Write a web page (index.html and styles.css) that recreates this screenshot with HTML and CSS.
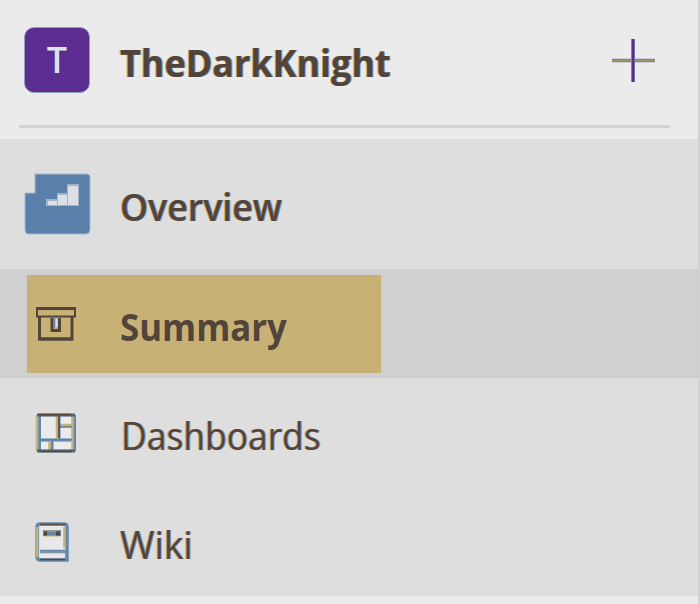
FILE: index.html
```
<!DOCTYPE html>
<html lang="en">
<head>
<meta charset="utf-8">
<title>TheDarkKnight</title>
<link rel="stylesheet" href="styles.css">
</head>
<body>
<nav class="sidebar">
  <header class="project">
    <div class="avatar">T</div>
    <span class="label name">TheDarkKnight</span>
    <svg class="add" width="46" height="46" viewBox="0 0 46 46">
      <path d="M1 23.500H44" stroke="#7187a1" stroke-width="3.400"/>
      <path d="M1 23.500H44" stroke="#a9976f" stroke-width="1"/>
      <path d="M20.500 2V45" stroke="#c8b174" stroke-width="1"/>
      <path d="M23.500 2V45" stroke="#809dbf" stroke-width="1"/>
      <path d="M22 2V45" stroke="#5c2d91" stroke-width="2.800"/>
    </svg>
  </header>
  <hr class="divider">
  <div class="row overview">
    <svg class="icon" width="68" height="63" viewBox="0 0 68 63">
      <path d="M12 1H64Q67 1 67 4V57Q67 61 63 61H5Q2 61 2 57V20H12Z" fill="#5980aa" stroke="#a9b7ca"/>
      <path d="M23 26H34V20H44V11H56V33H23Z" fill="#a4b4ca"/>
      <path d="M25 28H35V22H45V13H55V32H25Z" fill="#dce0e4"/>
      <path d="M34.500 22V32M44.500 18V32" stroke="#a4b4ca"/>
    </svg>
    <span class="label semibold">Overview</span>
  </div>
  <div class="row selected">
    <div class="highlight">
      <svg class="icon" width="42" height="36" viewBox="0 0 42 36" fill="none" stroke="#52443b">
        <path d="M2 2.500H40V10.500H2Z" stroke-width="2"/>
        <path d="M1 2.500H41" stroke-width="3"/>
        <path d="M4.500 10V33H37V10" stroke-width="3"/>
        <path d="M4 33H38" stroke-width="3"/>
        <path d="M17 12V24.500H24.500V12" stroke-width="3"/>
        <path d="M19.500 12V22" stroke="#668bb1" stroke-width="1.500"/>
        <path d="M21.500 13V21" stroke="#dedede" stroke-width="2"/>
      </svg>
      <span class="label summary">Summary</span>
    </div>
  </div>
  <div class="row">
    <svg class="icon" width="42" height="40" viewBox="0 0 42 40" fill="none">
      <path d="M4 4H22V25H4ZM26 4H37V11H26ZM26 15H37V25H26ZM4 29H14V36H4ZM19 29H37V36H19Z" fill="#ebebeb"/>
      <path d="M4.500 2V38M24 2V27M39.500 2V38M17 27V38M25 13H39M4 27H39" stroke="#6388b0" stroke-width="3"/>
      <path d="M2 2V38M22 3V26M37.500 3V37M14.500 28V37M26 12H37" stroke="#c8b174" stroke-width="2.500"/>
      <path d="M2 2H40M2 38H40" stroke="#536171" stroke-width="3"/>
      <path d="M4 1.500H36M4 38.500H37M24 3V25" stroke="#58483d" stroke-width="1.500"/>
      <path d="M4 26.500H37M25 14H37" stroke="#7b7b70" stroke-width="1"/>
    </svg>
    <span class="label dashboards">Dashboards</span>
  </div>
  <div class="row">
    <svg class="icon" width="34" height="40" viewBox="0 0 34 40" fill="none">
      <path d="M5 4H29V36H5Z" fill="#e8e8e8"/>
      <path d="M5 2H29Q32 2 32 5V38H5Q2 38 2 34V5Q2 2 5 2Z" stroke="#6388b0" stroke-width="3.500"/>
      <path d="M1.800 5V35M29.500 5V26" stroke="#c8b174" stroke-width="2.500"/>
      <path d="M5 2.500H30M5 37.500H30" stroke="#58483d" stroke-width="1.700"/>
      <path d="M5 29.500H31" stroke="#6388b0" stroke-width="3.500"/>
      <path d="M5 30H30" stroke="#b8a878" stroke-width="1" stroke-dasharray="2 1"/>
      <path d="M8 11H26" stroke="#6885a1" stroke-width="6"/>
      <path d="M9 9H25M9 14H25" stroke="#c0ad79" stroke-width="1"/>
      <path d="M9 11.500H12M21 11.500H25" stroke="#52443b" stroke-width="4"/>
    </svg>
    <span class="label wiki">Wiki</span>
  </div>
</nav>
</body>
</html>
```
FILE: styles.css
```
* { box-sizing: border-box; }
body {
  margin: 0;
  background: #ebebeb;
  color: #52443b;
  font-family: "Open Sans", "Noto Sans", sans-serif;
}
.sidebar {
  height: 604px;
  overflow: hidden;
  border-right: 2px solid #d2d2d2;
}
.project {
  display: flex;
  align-items: center;
  height: 125px;
  padding: 0 41px 5px 24px;
}
.avatar {
  width: 66px;
  height: 66px;
  border: 1px solid #8e9fc2;
  border-radius: 10px;
  background: #5c2d91;
  color: #dfe4ea;
  font-size: 36px;
  font-weight: 600;
  line-height: 64px;
  text-align: center;
}
.label {
  display: block;
  flex: none;
  font-size: 38px;
  line-height: 52px;
  white-space: nowrap;
  transform-origin: left center;
  text-shadow: -1px 0 #c8b174, 1px 0 #809dbf;
}
.name {
  margin: 3px 0 0 30px;
  font-weight: 700;
  transform: scaleX(.946);
}
.add { margin-left: auto; }
.divider {
  height: 3px;
  margin: 0 28px 11px 19px;
  border: 0;
  background: #d3d3d3;
}
.row {
  display: flex;
  align-items: center;
  height: 109px;
  padding-left: 35px;
  background: #dedede;
}
.icon { flex: none; }
.overview {
  height: 130px;
  padding-left: 23px;
}
.semibold {
  margin: 4px 0 0 29px;
  font-weight: 600;
  transform: scaleX(.94);
}
.selected {
  padding-left: 27px;
  background: #d0d0d0;
}
.highlight {
  display: flex;
  align-items: center;
  width: 354px;
  height: 98px;
  padding-left: 8px;
  background: #c8b174;
}
.summary {
  margin: 5px 0 0 43px;
  font-weight: 700;
  text-shadow: none;
  transform: scaleX(.915);
}
.dashboards {
  margin: 5px 0 0 44px;
  transform: scaleX(.932);
}
.wiki {
  margin: 4px 0 0 51px;
  transform: scaleX(.98);
}
```
